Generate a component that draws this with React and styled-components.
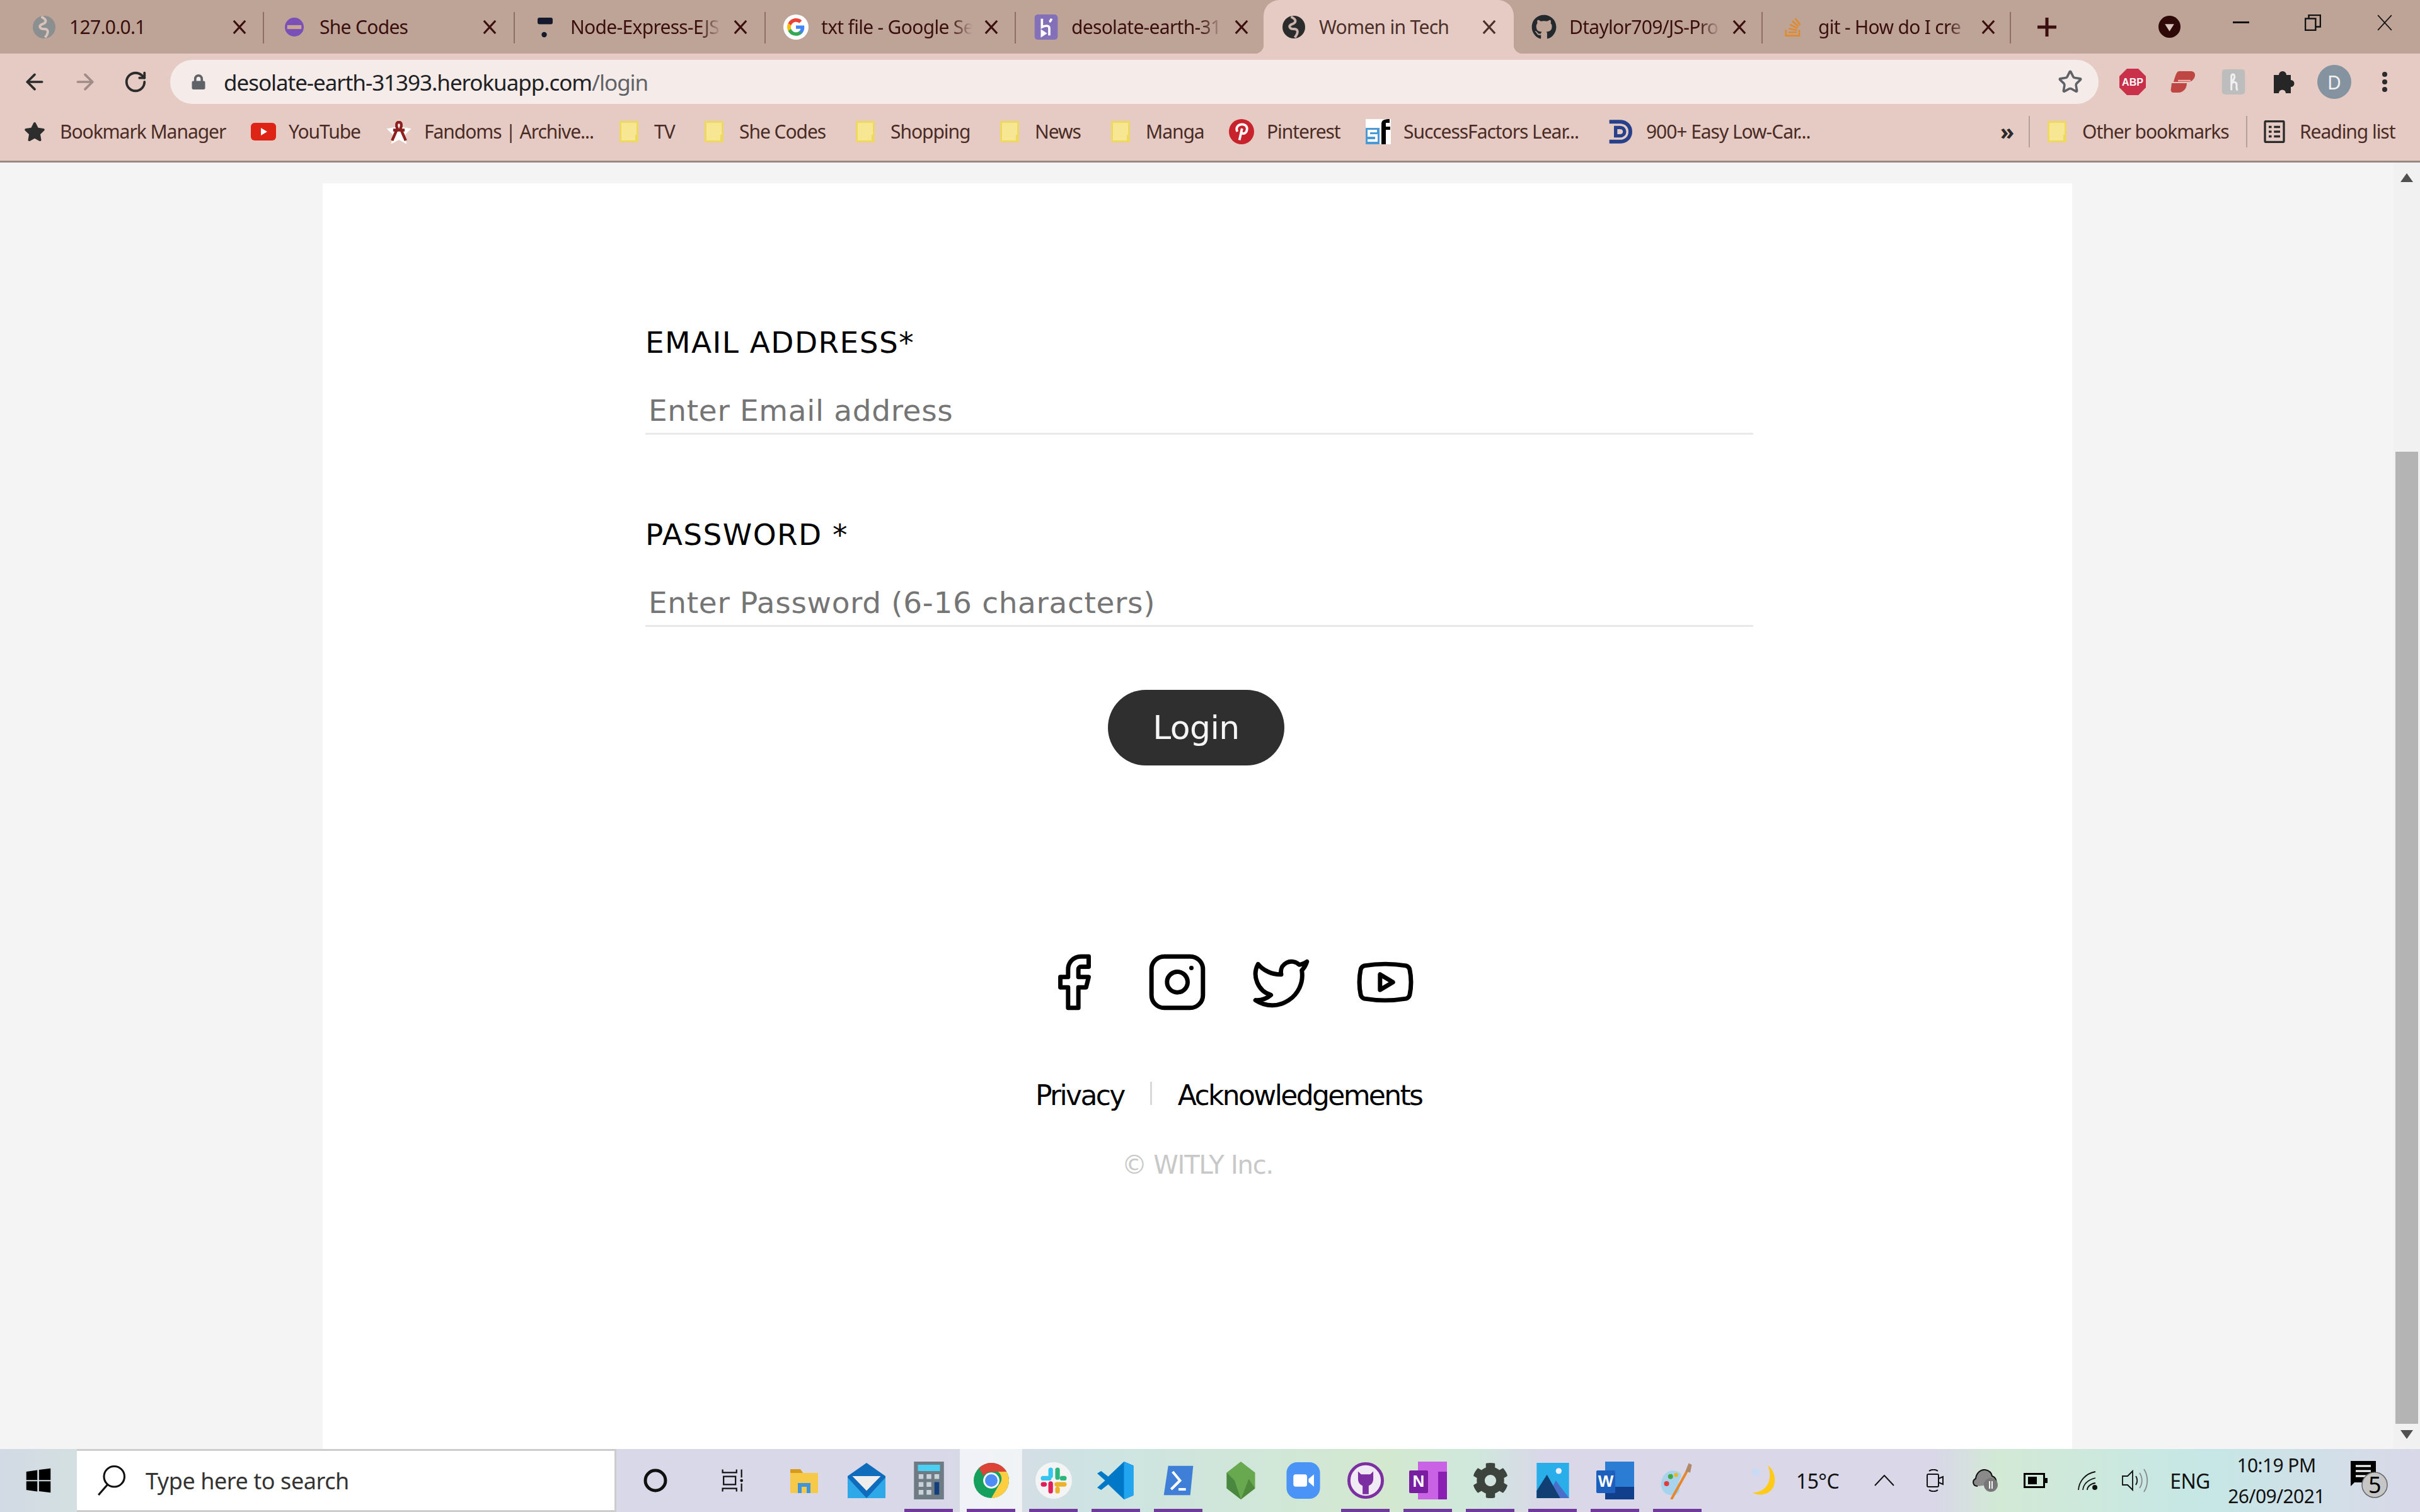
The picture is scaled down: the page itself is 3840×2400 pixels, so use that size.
import React from 'react';
import styled, { createGlobalStyle } from 'styled-components';
import { Facebook, Instagram, Twitter, Youtube, Star as StarLine, RotateCw, ArrowLeft, ArrowRight } from 'lucide-react';
import { FaGithub, FaStackOverflow, FaCog, FaStar, FaLock } from 'react-icons/fa';

const UI_FONT = `"Noto Sans", "Open Sans", sans-serif`;
const PAGE_FONT = `"DejaVu Sans", sans-serif`;

const GlobalStyle = createGlobalStyle`
    html, body {
        margin: 0;
        padding: 0;
        background: #f4f4f4;
    }
    * {
        box-sizing: border-box;
    }
`;

const Screen = styled.div`
    width: 3840px;
    height: 2400px;
    display: flex;
    flex-direction: column;
    overflow: hidden;
    font-family: ${UI_FONT};
`;

/* ---------- tab strip ---------- */

const TabStrip = styled.div`
    height: 85px;
    flex: none;
    display: flex;
    padding-left: 22px;
    background: #bea397;
`;

const Tab = styled.div`
    position: relative;
    width: ${p => p.$w}px;
    flex: none;
    display: flex;
    align-items: center;
    padding-left: 28px;
    color: ${p => (p.$active ? '#4b2f2a' : '#3a0f0d')};
    background: ${p => (p.$active ? '#e5cbc3' : 'transparent')};
    border-radius: ${p => (p.$active ? '25px 25px 0 0' : '0')};
    &::after {
        content: '';
        display: ${p => (p.$sep ? 'block' : 'none')};
        position: absolute;
        right: 0;
        top: 19px;
        width: 2px;
        height: 50px;
        background: #8f6f64;
    }
`;

const TabCurve = styled.span`
    position: absolute;
    bottom: 0;
    ${p => p.$side}: -14px;
    width: 14px;
    height: 14px;
    background: radial-gradient(circle at ${p => (p.$side === 'left' ? '0 0' : '100% 0')}, transparent 14px, #e5cbc3 14.5px);
`;

const IconSlot = styled.span`
    width: 40px;
    height: 40px;
    flex: none;
    display: flex;
    align-items: center;
    justify-content: center;
`;

const TabTitle = styled.span`
    width: 248px;
    margin-left: 20px;
    flex: none;
    font-size: 30px;
    letter-spacing: -0.7px;
    white-space: nowrap;
    ${p => p.$fade && `
        -webkit-mask-image: linear-gradient(to right, #000 205px, transparent 240px);
        mask-image: linear-gradient(to right, #000 205px, transparent 240px);
    `}
`;

const TabClose = styled.span`
    width: 44px;
    flex: none;
    display: flex;
    justify-content: center;
`;

const StripButton = styled.span`
    width: 114px;
    height: ${p => p.$h || 85}px;
    flex: none;
    display: flex;
    align-items: center;
    justify-content: center;
    margin-left: ${p => p.$ml || 0}px;
`;

/* ---------- toolbar ---------- */

const Toolbar = styled.div`
    height: 85px;
    flex: none;
    display: flex;
    align-items: flex-start;
    padding: 10px 0 0 15px;
    background: #e5cbc3;
`;

const NavButton = styled.span`
    width: 80px;
    height: 70px;
    flex: none;
    display: flex;
    align-items: center;
    justify-content: center;
    color: ${p => p.$dim ? '#a08c86' : '#2b2b2b'};
`;

const AddressBar = styled.div`
    width: 3060px;
    height: 70px;
    margin: 0 14px 0 15px;
    padding: 0 25px 0 25px;
    flex: none;
    display: flex;
    align-items: center;
    background: #f5ebe8;
    border-radius: 35px;
`;

const Url = styled.span`
    margin-left: 20px;
    font-size: 35px;
    letter-spacing: -1.05px;
    color: #202124;
    & > span {
        color: #5f6368;
    }
`;

const AddressEnd = styled.span`
    margin-left: auto;
    display: flex;
    color: #5f6368;
`;

const Avatar = styled.span`
    width: 54px;
    height: 54px;
    border-radius: 50%;
    display: flex;
    align-items: center;
    justify-content: center;
    background: #84939f;
    color: #f0f0f0;
    font-size: 30px;
`;

/* ---------- bookmarks ---------- */

const BookmarkBar = styled.div`
    height: 88px;
    flex: none;
    display: flex;
    align-items: center;
    padding: 0 0 8px 35px;
    background: #e5cbc3;
    border-bottom: 3px solid #9a8880;
`;

const Bookmark = styled.span`
    width: ${p => p.$w}px;
    flex: none;
    display: flex;
    align-items: center;
    gap: 20px;
    font-size: 30px;
    letter-spacing: -1.05px;
    color: #4a2b26;
    white-space: nowrap;
`;

const BarDivider = styled.span`
    width: 2px;
    height: 50px;
    flex: none;
    background: #b5a09a;
    margin-right: ${p => p.$mr || 0}px;
`;

const MoreChevron = styled.span`
    width: 45px;
    flex: none;
    font-size: 36px;
    font-weight: 700;
    color: #2b2b2b;
`;

/* ---------- page ---------- */

const Viewport = styled.div`
    flex: 1;
    min-height: 0;
    display: flex;
    background: #f4f4f4;
`;

const PageArea = styled.div`
    flex: 1;
    display: flex;
    justify-content: center;
    padding: 33px 0 0 2px;
`;

const Card = styled.main`
    width: 2776px;
    background: #ffffff;
    font-family: ${PAGE_FONT};
    color: #000000;
`;

const LoginForm = styled.form`
    width: 1758px;
    margin-left: 512px;
    padding-top: 223px;
`;

const Field = styled.div`
    margin-bottom: ${p => p.$mb}px;
`;

const Label = styled.label`
    display: block;
    height: 60px;
    font-size: 47px;
    line-height: 60px;
    letter-spacing: 1.4px;
    white-space: nowrap;
`;

const TextInput = styled.input`
    display: block;
    width: 100%;
    height: 99px;
    margin-top: 17px;
    padding: 24px 0 0 5px;
    border: 0;
    border-bottom: 3px solid #e9e9e9;
    outline: 0;
    background: transparent;
    font-family: ${PAGE_FONT};
    font-size: 47px;
    letter-spacing: 0.65px;
    &::placeholder {
        color: #757575;
        opacity: 1;
    }
`;

const LoginButton = styled.button`
    display: block;
    width: 280px;
    height: 120px;
    margin-left: 734px;
    border: 0;
    border-radius: 60px;
    background: #2f2f2f;
    color: #f5f5f5;
    font-family: ${PAGE_FONT};
    font-size: 52px;
    letter-spacing: -0.6px;
`;

const SocialRow = styled.div`
    display: flex;
    justify-content: center;
    gap: 67px;
    margin: 295px 0 0 100px;
    color: #000;
`;

const FooterLinks = styled.div`
    display: flex;
    margin: 101px 0 0 1131px;
    font-size: 44px;
    line-height: 60px;
    letter-spacing: -2.65px;
    & > span {
        white-space: nowrap;
    }
`;

const LinkDivider = styled.i`
    width: 3px;
    height: 37px;
    margin: 8px 41px 0 41px;
    flex: none;
    background: #d9d9d9;
`;

const Copyright = styled.div`
    margin-top: 50px;
    text-align: center;
    font-size: 40px;
    line-height: 60px;
    letter-spacing: -1.2px;
    color: #c8c8c8;
`;

const ScrollTrack = styled.div`
    width: 42px;
    flex: none;
    display: flex;
    flex-direction: column;
    align-items: center;
    background: #f1f1f1;
`;

const ScrollArrow = styled.span`
    width: 0;
    height: 0;
    flex: none;
    margin: ${p => p.$m};
    border-left: 10px solid transparent;
    border-right: 10px solid transparent;
    ${p => p.$up ? 'border-bottom: 14px solid #505050;' : 'border-top: 14px solid #505050;'}
`;

const ScrollThumb = styled.span`
    width: 36px;
    height: 1543px;
    flex: none;
    margin-top: 428px;
    background: #b4b4b4;
`;

/* ---------- taskbar ---------- */

const Taskbar = styled.footer`
    height: 100px;
    flex: none;
    display: flex;
    align-items: center;
    background: linear-gradient(90deg, #d2dae5 0, #d3dfe0 120px, #d9d8e8 1000px, #d9d8e8 1500px, #cde4e2 1750px, #d3e8cf 2200px, #cfe8dc 2340px, #d9d7e8 2450px, #d9d7e8 3070px, #d2e9d5 3170px, #c6e7e6 3500px, #d9d8e8 3840px);
`;

const StartButton = styled.span`
    width: 122px;
    height: 100%;
    flex: none;
    display: flex;
    align-items: center;
    justify-content: center;
`;

const SearchBox = styled.div`
    width: 856px;
    height: 100%;
    flex: none;
    display: flex;
    align-items: center;
    gap: 31px;
    padding: 0 0 0 28px;
    background: #ffffff;
    border: 3px solid #cccccc;
    border-width: 3px 3px 3px 0;
    color: #333333;
    font-size: 36px;
    letter-spacing: -0.45px;
`;

const TaskSlot = styled.span`
    width: ${p => p.$w || 99}px;
    height: 100%;
    flex: none;
    position: relative;
    display: flex;
    align-items: center;
    justify-content: center;
    background: ${p => p.$active ? 'rgba(255,255,255,0.65)' : 'transparent'};
    &::after {
        content: '';
        display: ${p => p.$open ? 'block' : 'none'};
        position: absolute;
        bottom: 0;
        left: 11px;
        right: 11px;
        height: 5px;
        background: #6f3a9c;
    }
`;

const TrayGroup = styled.div`
    height: 100%;
    margin-left: 53px;
    display: flex;
`;

const TraySlot = styled.span`
    width: ${p => p.$w}px;
    height: 100%;
    flex: none;
    display: flex;
    align-items: center;
    justify-content: center;
    font-size: 32px;
    letter-spacing: -0.6px;
    color: #111111;
`;

const Clock = styled.span`
    text-align: center;
    font-size: 30px;
    line-height: 49px;
    letter-spacing: -0.6px;
    white-space: nowrap;
    color: #111111;
`;

/* ---------- favicons and small drawings ---------- */

const Glyph = ({ s = 40, h, vb = '0 0 24 24', children }) => (
    <svg width={s} height={h || s} viewBox={vb} fill="none">{children}</svg>
);

const Globe = ({ color }) => (
    <Glyph s={36}>
        <circle cx="12" cy="12" r="12" fill={color} />
        <path d="M9 1c6 3 6 6 1 8-4 1-3 5 2 5 5 0 5 4 1 9" stroke="#e5cbc3" strokeWidth="2.6" opacity=".85" />
    </Glyph>
);

const SheCodes = () => (
    <Glyph s={30}>
        <circle cx="12" cy="12" r="12" fill="#7a4fb8" />
        <rect x="3" y="9.5" width="18" height="5" fill="#c8a68f" />
    </Glyph>
);

const NodeEjs = () => (
    <Glyph s={36}>
        <rect x="4" y="2" width="16" height="7" rx="2" fill="#141a2c" />
        <circle cx="11" cy="20" r="2.8" fill="#141a2c" />
    </Glyph>
);

const GoogleG = () => (
    <Glyph s={40}>
        <circle cx="12" cy="12" r="12" fill="#fff" />
        <path d="M20 12.2c0-.6 0-1.1-.2-1.7H12v3.2h4.5a3.9 3.9 0 0 1-1.7 2.5v2.1h2.7c1.6-1.4 2.5-3.5 2.5-6.1z" fill="#4285f4" />
        <path d="M12 20.3c2.2 0 4.1-.7 5.5-2l-2.7-2.1c-.8.5-1.7.8-2.8.8-2.1 0-3.9-1.4-4.6-3.4H4.6v2.2A8.3 8.3 0 0 0 12 20.3z" fill="#34a853" />
        <path d="M7.4 13.6a5 5 0 0 1 0-3.2V8.2H4.6a8.3 8.3 0 0 0 0 7.6z" fill="#fbbc05" />
        <path d="M12 7c1.2 0 2.3.4 3.2 1.2l2.4-2.4A8.3 8.3 0 0 0 4.6 8.2l2.8 2.2C8.1 8.4 9.9 7 12 7z" fill="#ea4335" />
    </Glyph>
);

const HerokuLogo = () => (
    <Glyph s={40}>
        <rect x="1" y="0" width="22" height="24" rx="3" fill="#8470b8" />
        <path d="M8 4v8c3-1.500 7-2 7 1v7M17 4c-.3 1.500-1 2.500-2 3M8 20l3-2-3-2z" stroke="#fff" strokeWidth="2.2" />
    </Glyph>
);

const Folder = () => (
    <Glyph s={30} h={34} vb="0 0 30 34">
        <rect x="1.500" y="1.500" width="27" height="31" fill="#f8e792" stroke="#eed85f" strokeWidth="3" />
        <path d="M29 23h-3v10" stroke="#eed85f" strokeWidth="2" />
    </Glyph>
);

const YoutubeMark = () => (
    <Glyph s={40} h={28} vb="0 0 40 28">
        <rect width="40" height="28" rx="6" fill="#de2414" />
        <path d="M16 8l10 6-10 6z" fill="#fff" />
    </Glyph>
);

const RibbonMark = () => (
    <Glyph s={40} h={40}>
        <path d="M12 0l3.500 7.500L24 9l-6 6 1.500 9L12 20l-7.500 4L6 15 0 9l8.500-1.500z" fill="#fff" stroke="#e8d0cc" strokeWidth=".5" />
        <path d="M12 3c-2.500 0-3 3-1.500 6L5.500 20.500M12 3c2.500 0 3 3 1.500 6l5 11.500M6.500 10.500h11" stroke="#8d1f1f" strokeWidth="2.600" />
    </Glyph>
);

const PinterestMark = () => (
    <Glyph s={40}>
        <circle cx="12" cy="12" r="12" fill="#c8232c" />
        <path d="M10 20l2.500-11M8 12c-2-4 1-7 4.500-7 3.500 0 5.500 2.500 4.500 6-.8 2.800-3.500 3.500-5 2" stroke="#fff" strokeWidth="2.300" />
    </Glyph>
);

const SfMark = () => (
    <svg width="40" height="40" viewBox="0 0 40 40">
        <rect width="40" height="40" fill="#fff" />
        <rect x="0" y="14" width="22" height="26" fill="#4a9ad8" />
        <path d="M18 19H5v7h12v8H3" stroke="#fff" strokeWidth="4" fill="none" />
        <path d="M38 0c-9 0-13 2-13 8v32h7V17h7v-5h-7V6h6z" fill="#000" />
    </svg>
);

const DietMark = () => (
    <Glyph s={40}>
        <path d="M1 2.500h10c6 0 10 4 10 9.500s-4 9.500-10 9.500H1" stroke="#26408b" strokeWidth="3.600" />
        <path d="M7 8h4c3 0 4.500 2 4.500 4s-1.500 4-4.500 4H7z" stroke="#26408b" strokeWidth="3.200" />
    </Glyph>
);

const ReadingList = () => (
    <Glyph s={36} h={36}>
        <rect x="2" y="1" width="20" height="22" rx="1" stroke="#2b2b2b" strokeWidth="2.200" />
        <path d="M6 7h3M11.500 7h6.500M6 12h3M11.500 12h6.500M6 17h3M11.500 17h6.500" stroke="#2b2b2b" strokeWidth="2.400" />
    </Glyph>
);

const CloseMark = ({ color = 'currentColor', w = 3.4, s = 22 }) => (
    <Glyph s={s}>
        <path d="M2 1l20 22M22 1L2 23" stroke={color} strokeWidth={w} />
    </Glyph>
);

const PlusMark = () => (
    <Glyph s={30}>
        <path d="M12 0v24M0 12h24" stroke="#3a0f0d" strokeWidth="4" />
    </Glyph>
);

const ProfileDrop = () => (
    <Glyph s={35}>
        <circle cx="12" cy="12" r="12" fill="#2f0808" />
        <path d="M7 9h10l-5 8z" fill="#d9c4bc" />
    </Glyph>
);

const AbpMark = () => (
    <svg width="42" height="42" viewBox="0 0 42 42">
        <path d="M12 0h18l12 12v18L30 42H12L0 30V12z" fill="#c9314b" />
        <text x="21" y="27" textAnchor="middle" fill="#fff" fontSize="16" fontWeight="700" fontFamily="Liberation Sans, sans-serif">ABP</text>
    </svg>
);

const VpnMark = () => (
    <svg width="40" height="34" viewBox="0 0 40 34">
        <path d="M14 0h18c7 0 9 6 5 12-2 3-5 5-10 5H5C8 6 10 0 14 0z" fill="#bf4743" />
        <path d="M2 19h24c0 8-5 15-14 15H5c-4 0-5-3-4-7z" fill="#bf4743" />
        <path d="M12 15h20" stroke="#e8b3ad" strokeWidth="2.500" />
    </svg>
);

const HoneyMark = () => (
    <Glyph s={40}>
        <rect x="1" y="0" width="22" height="24" rx="3" fill="#bdbdbd" />
        <path d="M10 20V7c0-3 3-3 3 0 0 3-3 5-3 7 2-3 5-2 5 1 0 2-.5 4 1 5" stroke="#f0f0f0" strokeWidth="1.800" />
    </Glyph>
);

const PuzzleMark = () => (
    <svg width="38" height="36" viewBox="0 0 38 36">
        <path d="M3 7h8a6 6 0 1 1 12 0h7v8a5.500 5.500 0 1 1 0 11v10h-8a5.500 5.500 0 0 0-11 0H3z" fill="#262626" />
    </svg>
);

const Dots = () => (
    <Glyph s={10} h={34} vb="0 0 10 34">
        <circle cx="5" cy="5" r="4" fill="#2b2b2b" />
        <circle cx="5" cy="17" r="4" fill="#2b2b2b" />
        <circle cx="5" cy="29" r="4" fill="#2b2b2b" />
    </Glyph>
);

const RestoreMark = () => (
    <Glyph s={26}>
        <rect x="1" y="6" width="15" height="17" stroke="#111" strokeWidth="2.200" />
        <path d="M6 6V1h17v17h-7" stroke="#111" strokeWidth="2.200" />
    </Glyph>
);

const WindowsLogo = () => (
    <Glyph s={42}>
        <path d="M1 4l10-1.500v9H1zM12.500 2.300L23 1v10.500H12.500zM1 12.700h10V22L1 20.500zM12.500 12.700H23V23l-10.500-1.300z" fill="#000" />
    </Glyph>
);

const SearchGlass = () => (
    <Glyph s={50}>
        <circle cx="15" cy="9" r="7.800" stroke="#111" strokeWidth="1.500" />
        <path d="M10 15L3 23" stroke="#111" strokeWidth="1.500" />
    </Glyph>
);

const TaskView = () => (
    <Glyph s={38}>
        <path d="M1 1v3h14V1M2 8h12v8H2zM1 23v-3h14v3M20 1v8M20 15v8" stroke="#111" strokeWidth="1.400" />
        <circle cx="20" cy="12" r="1.500" fill="#111" />
    </Glyph>
);

const Explorer = () => (
    <Glyph s={48}>
        <path d="M1 3h8l2 3h12v16H1z" fill="#f7c948" />
        <path d="M1 3h8l2 3H1z" fill="#d89a1a" />
        <path d="M7 22v-8h10v8h-3v-5h-4v5z" fill="#3f94dc" />
    </Glyph>
);

const Mail = () => (
    <svg width="60" height="56" viewBox="0 0 24 24" preserveAspectRatio="none">
        <path d="M0 9l12-9 12 9v15H0z" fill="#0f6cbd" />
        <path d="M3 9h18l-9 10z" fill="#eee" />
        <path d="M0 10l12 14H0zM24 10L12 24h12z" fill="#2ea8e8" />
    </svg>
);

const Calc = () => (
    <Glyph s={60}>
        <rect x="2.500" y="0" width="19" height="24" fill="#6e7b85" />
        <rect x="5" y="2" width="14" height="4" fill="#4bd0f5" />
        <path d="M5.500 8h3v3h-3zM10.500 8h3v3h-3zM15.500 8h3v3h-3zM5.500 13h3v3h-3zM10.500 13h3v3h-3zM5.500 18h3v3h-3zM10.500 18h3v3h-3z" fill="#c9d2d8" />
        <rect x="15.500" y="13" width="3" height="8" fill="#123f7c" />
    </Glyph>
);

const Chrome = () => (
    <Glyph s={56}>
        <circle cx="12" cy="12" r="12" fill="#16a05d" />
        <path d="M12 0a12 12 0 0 1 10.400 6H12a6 6 0 0 0-5.200 3L3.600 3.600A12 12 0 0 1 12 0z" fill="#db4437" />
        <path d="M22.400 6A12 12 0 0 1 12 24l5.200-9a6 6 0 0 0-.6-9z" fill="#ffcd40" />
        <circle cx="12" cy="12" r="5.500" fill="#fff" />
        <circle cx="12" cy="12" r="4.300" fill="#4d8df5" />
    </Glyph>
);

const Slack = () => (
    <Glyph s={58}>
        <circle cx="12" cy="12" r="12" fill="#f4f4f4" />
        <path d="M10 5v4M5 10.500h4" stroke="#36c5f0" strokeWidth="3" strokeLinecap="round" />
        <path d="M14.500 5v5M19 10.500h-1.500" stroke="#2eb67d" strokeWidth="3" strokeLinecap="round" />
        <path d="M14.500 19v-1.500M19 14.500h-5" stroke="#ecb22e" strokeWidth="3" strokeLinecap="round" />
        <path d="M10 19v-5M5 14.500h1" stroke="#e01e5a" strokeWidth="3" strokeLinecap="round" />
    </Glyph>
);

const VsCode = () => (
    <Glyph s={60}>
        <path d="M17 0l6 2.500v19L17 24 7 14.500 2.500 18 0 16.500 5 12 0 7.500 2.500 6 7 9.500z" fill="#0078c8" />
        <path d="M17 0l6 2.500v19L17 24z" fill="#22a5f1" />
    </Glyph>
);

const Shell = () => (
    <Glyph s={56}>
        <path d="M5 2h17l-2 20H2z" fill="#3f7fd8" />
        <path d="M8 6l5 6-6 6M12 18h5" stroke="#fff" strokeWidth="1.800" />
    </Glyph>
);

const NodeHex = () => (
    <Glyph s={60}>
        <path d="M12 0l9 7v10l-9 7-9-7V7z" fill="#68a84f" />
        <path d="M12 24l9-7-4-6z" fill="#4f8a3c" />
        <path d="M12 24l-9-7V7l5 5z" fill="#4a8840" />
    </Glyph>
);

const ZoomApp = () => (
    <Glyph s={58}>
        <rect x="1" y="0" width="22" height="24" rx="7" fill="#4b94f7" />
        <rect x="5.500" y="8" width="9" height="8" rx="1.500" fill="#fff" />
        <path d="M15.500 11l3.500-3v8l-3.500-3z" fill="#fff" />
    </Glyph>
);

const GithubDesktop = () => (
    <Glyph s={58}>
        <circle cx="12" cy="12" r="11" fill="#f0eaf5" stroke="#7b2fa0" strokeWidth="2" />
        <path d="M7 6l2 2h6l2-2v5c0 3-2 4-3 4.500V21h-4v-5.500C9 15 7 14 7 11z" fill="#7b2fa0" />
    </Glyph>
);

const OneNote = () => (
    <svg width="60" height="60" viewBox="0 0 60 60">
        <rect x="14" y="0" width="46" height="60" fill="#c962e4" />
        <rect x="46" y="16" width="14" height="44" fill="#8c1fb3" />
        <rect x="0" y="14" width="30" height="36" rx="2" fill="#7a1ea1" />
        <text x="15" y="40" textAnchor="middle" fontSize="26" fontWeight="700" fill="#fff" fontFamily="Liberation Sans, sans-serif">N</text>
    </svg>
);

const Photos = () => (
    <Glyph s={56}>
        <rect x="1" y="0" width="22" height="24" fill="#29aeea" />
        <path d="M14 12l9 12H8z" fill="#4a6fc8" />
        <path d="M8 8l9 16H1V19z" fill="#123f73" />
        <circle cx="16" cy="5.500" r="2" fill="#eef" />
    </Glyph>
);

const Word = () => (
    <svg width="60" height="60" viewBox="0 0 60 60">
        <rect x="14" y="0" width="46" height="60" fill="#2b7cd3" />
        <rect x="14" y="40" width="46" height="20" fill="#123f8c" />
        <rect x="0" y="14" width="30" height="36" rx="2" fill="#1d5fbd" />
        <text x="15" y="40" textAnchor="middle" fontSize="26" fontWeight="700" fill="#fff" fontFamily="Liberation Sans, sans-serif">W</text>
    </svg>
);

const Paint = () => (
    <Glyph s={60}>
        <path d="M2 17C0 11 5 4 11 6c4 1 4 3 2 6-1.500 3 1 4 0 7-1 3-9 4-11-2z" fill="#a8d3ec" />
        <circle cx="5" cy="14" r="1.600" fill="#e23b3b" />
        <circle cx="7.500" cy="9.500" r="1.600" fill="#46a746" />
        <circle cx="11" cy="8.500" r="1.300" fill="#e8b82a" />
        <path d="M8 24L18 6" stroke="#e8862a" strokeWidth="1.600" />
        <path d="M17 6l2-5 2 1-1 5z" fill="#b08a68" />
    </Glyph>
);

const Moon = () => (
    <svg width="50" height="48" viewBox="0 0 50 48">
        <path d="M36 0c12 8 14 26 8 36-6 10-22 14-32 7 12 0 22-6 26-18 2-8 2-16-2-25z" fill="#ffcb18" />
        <path d="M12 8c1-4 8-5 10-1 2 5 0 10-4 10-5 0-7-4-6-9z" fill="#c7dcf4" />
    </svg>
);

const Caret = () => (
    <svg width="32" height="18" viewBox="0 0 32 18">
        <path d="M1 17L16 1l15 16" stroke="#111" strokeWidth="2" fill="none" />
    </svg>
);

const Meet = () => (
    <svg width="28" height="36" viewBox="0 0 28 36">
        <path d="M5 3c4-3 10-3 14 0M5 33c4 3 10 3 14 0" stroke="#111" strokeWidth="2" fill="none" />
        <rect x="2" y="8" width="18" height="20" rx="2" stroke="#111" strokeWidth="2" fill="none" />
        <path d="M20 15l7-3v12l-7-3" stroke="#111" strokeWidth="2" fill="none" />
    </svg>
);

const OneDrive = () => (
    <svg width="42" height="36" viewBox="0 0 42 36">
        <path d="M8 27C0 27-1 18 5 15 6 6 13 0 20 1c6 1 10 5 11 10 6 2 8 8 5 13" fill="#8a8a8a" stroke="#111" strokeWidth="2" />
        <circle cx="29" cy="25" r="11" fill="#777" />
        <path d="M27 19v12M31 19v12" stroke="#fff" strokeWidth="1.800" />
    </svg>
);

const Battery = () => (
    <svg width="38" height="24" viewBox="0 0 38 24">
        <rect x="1.500" y="1.500" width="31" height="21" fill="none" stroke="#000" strokeWidth="3" />
        <rect x="7" y="6" width="14" height="12" fill="#000" />
        <rect x="34" y="8" width="4" height="8" fill="#000" />
    </svg>
);

const Wifi = () => (
    <svg width="32" height="30" viewBox="0 0 32 30">
        <path d="M1 30C2 16 12 4 28 1M8 30c1-9 8-16 20-19M15 30c0-5 5-10 13-11" stroke="#111" strokeWidth="1.800" fill="none" />
        <circle cx="27" cy="26" r="4" fill="#111" />
    </svg>
);

const Volume = () => (
    <svg width="44" height="38" viewBox="0 0 44 38">
        <path d="M2 12h8l8-8v30l-8-8H2z" stroke="#111" strokeWidth="1.800" fill="none" />
        <path d="M23 12c3 4 3 10 0 14" stroke="#111" strokeWidth="1.800" fill="none" />
        <path d="M29 7c5 7 5 17 0 24M36 1c7 11 7 25 0 36" stroke="#888" strokeWidth="1.800" fill="none" />
    </svg>
);

const Notifications = () => (
    <svg width="60" height="62" viewBox="0 0 60 62">
        <path d="M0 0h40v34H6l-6 6z" fill="#000" />
        <path d="M8 8h24M8 16h24M8 24h24" stroke="#fff" strokeWidth="3" />
        <circle cx="38" cy="38" r="20" fill="#c6c6c6" stroke="#666" strokeWidth="1.500" />
        <text x="38" y="51" textAnchor="middle" fontSize="36" fill="#000" fontFamily="Noto Sans, sans-serif">5</text>
    </svg>
);

/* ---------- data ---------- */

const tabs = [
    { w: 397, title: '127.0.0.1', icon: <Globe color="#8c8f90" />, sep: true },
    { w: 398, title: 'She Codes', icon: <SheCodes />, sep: true },
    { w: 398, title: 'Node-Express-EJS', icon: <NodeEjs />, sep: true, fade: true },
    { w: 397, title: 'txt file - Google Se', icon: <GoogleG />, sep: true, fade: true },
    { w: 393, title: 'desolate-earth-31', icon: <HerokuLogo />, fade: true },
    { w: 397, title: 'Women in Tech', icon: <Globe color="#2b2b2b" />, active: true },
    { w: 395, title: 'Dtaylor709/JS-Pro', icon: <FaGithub size={40} color="#24292e" />, sep: true, fade: true },
    { w: 394, title: 'git - How do I cre', icon: <FaStackOverflow size={34} color="#e08a2c" />, sep: true, fade: true },
];

const bookmarks = [
    { w: 363, label: 'Bookmark Manager', icon: <FaStar size={34} color="#2d2d2d" /> },
    { w: 215, label: 'YouTube', icon: <YoutubeMark /> },
    { w: 365, label: 'Fandoms | Archive...', icon: <RibbonMark /> },
    { w: 135, label: 'TV', icon: <Folder /> },
    { w: 240, label: 'She Codes', icon: <Folder /> },
    { w: 229, label: 'Shopping', icon: <Folder /> },
    { w: 176, label: 'News', icon: <Folder /> },
    { w: 192, label: 'Manga', icon: <Folder /> },
    { w: 217, label: 'Pinterest', icon: <PinterestMark /> },
    { w: 385, label: 'SuccessFactors Lear...', icon: <SfMark /> },
    { w: 622, label: '900+ Easy Low-Car...', icon: <DietMark /> },
];

const taskApps = [
    { icon: <Explorer /> },
    { icon: <Mail /> },
    { icon: <Calc />, open: true },
    { icon: <Chrome />, open: true, active: true },
    { icon: <Slack />, open: true },
    { icon: <VsCode />, open: true },
    { icon: <Shell />, open: true },
    { icon: <NodeHex /> },
    { icon: <ZoomApp /> },
    { icon: <GithubDesktop />, open: true },
    { icon: <OneNote />, open: true },
    { icon: <FaCog size={58} color="#3d443e" />, open: true },
    { icon: <Photos />, open: true },
    { icon: <Word />, open: true },
    { icon: <Paint />, open: true },
];

function App() {
    return (
        <Screen>
            <GlobalStyle />

            <TabStrip>
                {tabs.map(tab => (
                    <Tab key={tab.title} $w={tab.w} $sep={tab.sep} $active={tab.active}>
                        {tab.active && <TabCurve $side="left" />}
                        {tab.active && <TabCurve $side="right" />}
                        <IconSlot>{tab.icon}</IconSlot>
                        <TabTitle $fade={tab.fade}>{tab.title}</TabTitle>
                        <TabClose><CloseMark /></TabClose>
                    </Tab>
                ))}
                <StripButton><PlusMark /></StripButton>
                <StripButton $ml={80}><ProfileDrop /></StripButton>
                <StripButton $h={72}>
                    <svg width="26" height="4"><rect width="26" height="3" fill="#111" /></svg>
                </StripButton>
                <StripButton $h={72}><RestoreMark /></StripButton>
                <StripButton $h={72}><CloseMark color="#111" w={1.500} s={26} /></StripButton>
            </TabStrip>

            <Toolbar>
                <NavButton><ArrowLeft size={40} strokeWidth={2.200} /></NavButton>
                <NavButton $dim><ArrowRight size={40} strokeWidth={2.200} /></NavButton>
                <NavButton><RotateCw size={38} strokeWidth={2.400} /></NavButton>
                <AddressBar>
                    <IconSlot><FaLock size={24} color="#5f6368" /></IconSlot>
                    <Url>desolate-earth-31393.herokuapp.com<span>/login</span></Url>
                    <AddressEnd><StarLine size={40} strokeWidth={2.200} /></AddressEnd>
                </AddressBar>
                <NavButton><AbpMark /></NavButton>
                <NavButton><VpnMark /></NavButton>
                <NavButton><HoneyMark /></NavButton>
                <NavButton><PuzzleMark /></NavButton>
                <NavButton><Avatar>D</Avatar></NavButton>
                <NavButton><Dots /></NavButton>
            </Toolbar>

            <BookmarkBar>
                {bookmarks.map(mark => (
                    <Bookmark key={mark.label} $w={mark.w}>
                        <IconSlot>{mark.icon}</IconSlot>
                        {mark.label}
                    </Bookmark>
                ))}
                <MoreChevron>»</MoreChevron>
                <BarDivider $mr={23} />
                <Bookmark $w={320}>
                    <IconSlot><Folder /></IconSlot>
                    Other bookmarks
                </Bookmark>
                <BarDivider $mr={23} />
                <Bookmark $w={210}>
                    <IconSlot><ReadingList /></IconSlot>
                    Reading list
                </Bookmark>
            </BookmarkBar>

            <Viewport>
                <PageArea>
                    <Card>
                        <LoginForm>
                            <Field $mb={129}>
                                <Label htmlFor="email">EMAIL ADDRESS*</Label>
                                <TextInput id="email" placeholder="Enter Email address" />
                            </Field>
                            <Field $mb={100}>
                                <Label htmlFor="password">PASSWORD *</Label>
                                <TextInput id="password" placeholder="Enter Password (6-16 characters)" />
                            </Field>
                            <LoginButton type="button">Login</LoginButton>
                        </LoginForm>
                        <SocialRow>
                            <Facebook size={98} strokeWidth={1.700} />
                            <Instagram size={98} strokeWidth={1.700} />
                            <Twitter size={98} strokeWidth={1.700} />
                            <Youtube size={98} strokeWidth={1.700} />
                        </SocialRow>
                        <FooterLinks>
                            <span>Privacy</span>
                            <LinkDivider />
                            <span>Acknowledgements</span>
                        </FooterLinks>
                        <Copyright>© WITLY Inc.</Copyright>
                    </Card>
                </PageArea>
                <ScrollTrack>
                    <ScrollArrow $up $m="17px 0 0" />
                    <ScrollThumb />
                    <ScrollArrow $m="10px 0 0" />
                </ScrollTrack>
            </Viewport>

            <Taskbar>
                <StartButton><WindowsLogo /></StartButton>
                <SearchBox>
                    <SearchGlass />
                    Type here to search
                </SearchBox>
                <TaskSlot $w={124}>
                    <svg width="40" height="40" viewBox="0 0 40 40"><circle cx="20" cy="20" r="16" fill="none" stroke="#111" strokeWidth="5" /></svg>
                </TaskSlot>
                <TaskSlot $w={124}><TaskView /></TaskSlot>
                {taskApps.map((app, i) => (
                    <TaskSlot key={i} $open={app.open} $active={app.active}>{app.icon}</TaskSlot>
                ))}
                <TrayGroup>
                    <TraySlot $w={60}><Moon /></TraySlot>
                    <TraySlot $w={120}>15°C</TraySlot>
                    <TraySlot $w={92}><Caret /></TraySlot>
                    <TraySlot $w={68}><Meet /></TraySlot>
                    <TraySlot $w={94}><OneDrive /></TraySlot>
                    <TraySlot $w={64}><Battery /></TraySlot>
                    <TraySlot $w={102}><Wifi /></TraySlot>
                    <TraySlot $w={48}><Volume /></TraySlot>
                    <TraySlot $w={126}>ENG</TraySlot>
                    <TraySlot $w={148}><Clock>10:19 PM<br />26/09/2021</Clock></TraySlot>
                    <TraySlot $w={148}><Notifications /></TraySlot>
                </TrayGroup>
            </Taskbar>
        </Screen>
    );
}

export default App;
